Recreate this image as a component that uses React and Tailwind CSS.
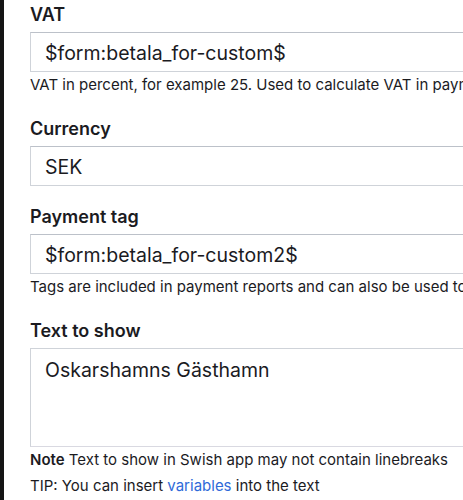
import React from "react";

const font = { fontFamily: "Inter, 'Noto Sans', sans-serif" };

const Field = ({ label, children, help }) => (
  <div className="mb-[19px]">
    <div className="text-[18px] leading-[24px] font-semibold text-[#1b1b1f] mb-[5px]">
      {label}
    </div>
    {children}
    {help && (
      <p className="text-[15px] leading-[26px] text-[#1b1b1f] whitespace-nowrap">
        {help}
      </p>
    )}
  </div>
);

const TextInput = ({ value }) => (
  <input
    readOnly
    value={value}
    className="block w-[760px] h-[40px] px-[14px] pt-[2px] text-[19.5px] text-[#1b1b1f] bg-white border border-[#cfd3d9] border-t-[#bcc1c9] outline-none"
  />
);

export default function App() {
  return (
    <div className="flex w-[463px] h-[500px] overflow-hidden bg-white" style={font}>
      {/* dark sidebar edge */}
      <div className="w-[4px] shrink-0 bg-[#151515]" />
      <div className="pl-[26px] pt-[3px] w-[800px] shrink-0">
        <Field
          label="VAT"
          help="VAT in percent, for example 25. Used to calculate VAT in payment reports"
        >
          <TextInput value="$form:betala_for-custom$" />
        </Field>

        <Field label="Currency">
          <TextInput value="SEK" />
        </Field>

        <Field
          label="Payment tag"
          help="Tags are included in payment reports and can also be used to filter payments"
        >
          <TextInput value="$form:betala_for-custom2$" />
        </Field>

        <div>
          <div className="text-[18px] leading-[24px] font-semibold text-[#1b1b1f] mb-[5px]">
            Text to show
          </div>
          <textarea
            readOnly
            value="Oskarshamns Gästhamn"
            className="block w-[760px] h-[99px] px-[14px] pt-[7px] text-[19.5px] leading-[28px] text-[#1b1b1f] bg-white border border-[#cfd3d9] border-b-[#d9d9e1] outline-none resize-none"
          />
          <p className="text-[15px] leading-[26px] text-[#1b1b1f] whitespace-nowrap">
            <span className="font-semibold">Note</span> Text to show in Swish app may not contain linebreaks
          </p>
          <p className="text-[15px] leading-[26px] text-[#1b1b1f] whitespace-nowrap">
            TIP: You can insert <a className="text-[#2f6ad9]">variables</a> into the text
          </p>
        </div>
      </div>
    </div>
  );
}
